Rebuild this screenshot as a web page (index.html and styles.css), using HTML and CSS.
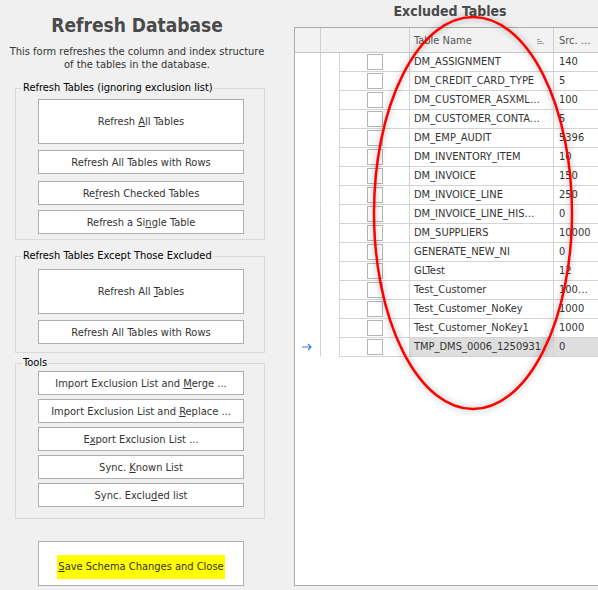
FILE: index.html
```html
<!DOCTYPE html>
<html lang="en">
<head>
    <meta charset="UTF-8">
    <meta name="viewport" content="width=device-width, initial-scale=1.0">
    <title>Refresh Database</title>
    <link rel="stylesheet" href="styles.css">
</head>
<body>
    <div class="left">
        <h1 class="title">Refresh Database</h1>
        <p class="intro">This form refreshes the column and index structure<br>of the tables in the database.</p>

        <div class="group group-ignore">
            <div class="legend">Refresh Tables (ignoring exclusion list)</div>
            <button class="btn big first">Refresh <u>A</u>ll Tables</button>
            <button class="btn b2">Refresh All Tables with Rows</button>
            <button class="btn b3">Re<u>f</u>resh Checked Tables</button>
            <button class="btn b4">Refresh a Si<u>n</u>gle Table</button>
        </div>

        <div class="group group-except">
            <div class="legend">Refresh Tables Except Those Excluded</div>
            <button class="btn big first">Refresh All <u>T</u>ables</button>
            <button class="btn b2">Refresh All Tables with Rows</button>
        </div>

        <div class="group group-tools">
            <div class="legend">Tools</div>
            <button class="btn tool first">Import Exclusion List and <u>M</u>erge ...</button>
            <button class="btn tool">Import Exclusion List and <u>R</u>eplace ...</button>
            <button class="btn tool">E<u>x</u>port Exclusion List ...</button>
            <button class="btn tool">Sync. <u>K</u>nown List</button>
            <button class="btn tool">Sync. Exclu<u>d</u>ed list</button>
        </div>

        <button class="btn big save"><span class="highlight"><u>S</u>ave Schema Changes and Close</span></button>
    </div>

    <div class="right">
        <h2 class="grid-title">Excluded Tables</h2>
        <div class="grid">
            <table>
                <colgroup>
                    <col class="c-ind"><col class="c-indent"><col class="c-check"><col class="c-name"><col class="c-src">
                </colgroup>
                <thead>
                    <tr>
                        <th class="ind"></th>
                        <th colspan="2"></th>
                        <th class="name">Table Name
                            <svg class="sort" width="8" height="7" viewBox="0 0 8 7">
                                <rect x="0" y="0" width="3" height="1" fill="#a0a0a0"/>
                                <rect x="0" y="2" width="5" height="1" fill="#a0a0a0"/>
                                <rect x="0" y="4" width="7" height="1" fill="#a0a0a0"/>
                            </svg>
                        </th>
                        <th class="src">Src. …</th>
                    </tr>
                </thead>
                <tbody id="rows"></tbody>
            </table>
        </div>
    </div>

    <svg class="annotation" width="598" height="590" viewBox="0 0 598 590">
        <ellipse cx="473" cy="213" rx="99" ry="196" fill="none" stroke="#ff0000" stroke-width="2.5"/>
    </svg>

    <script>
        (function(){
            const tables = [
                ['DM_ASSIGNMENT', '140'],
                ['DM_CREDIT_CARD_TYPE', '5'],
                ['DM_CUSTOMER_ASXML…', '100'],
                ['DM_CUSTOMER_CONTA…', '5'],
                ['DM_EMP_AUDIT', '5396'],
                ['DM_INVENTORY_ITEM', '10'],
                ['DM_INVOICE', '150'],
                ['DM_INVOICE_LINE', '250'],
                ['DM_INVOICE_LINE_HIS…', '0'],
                ['DM_SUPPLIERS', '10000'],
                ['GENERATE_NEW_NI', '0'],
                ['GLTest', '12'],
                ['Test_Customer', '100…'],
                ['Test_Customer_NoKey', '1000'],
                ['Test_Customer_NoKey1', '1000'],
                ['TMP_DMS_0006_1250931', '0']
            ];

            const rowsBody = document.getElementById('rows');
            const arrow = '<svg class="arrow" width="10" height="8" viewBox="0 0 10 8"><path d="M0 4H9M6 1L9 4L6 7" fill="none" stroke="#3d7fd6" stroke-width="1.2"/></svg>';

            tables.forEach((table, index) => {
                const last = index === tables.length - 1;
                const $row = document.createElement('tr');
                if (last) $row.classList.add('selected');

                $row.innerHTML = `
                    <td class="ind">${last ? arrow : ''}</td>
                    <td class="indent"></td>
                    <td class="check"><span class="box"></span></td>
                    <td class="name">${table[0]}</td>
                    <td class="src">${table[1]}</td>
                `;
                rowsBody.appendChild($row);
            });
        })()
    </script>
</body>
</html>
```

FILE: styles.css
```css
* {
    margin: 0;
    padding: 0;
    box-sizing: border-box;
}
html, body {
    overflow: hidden;
}
body {
    width: 598px;
    height: 590px;
    display: flex;
    background-color: #f0f0f0;
    color: #333;
    font-family: "DejaVu Sans Condensed", "DejaVu Sans", "Liberation Sans", sans-serif;
    font-stretch: condensed;
    font-size: 11px;
}

/* left panel */
div.left {
    width: 294px;
    flex: none;
    padding-left: 15px;
}
h1.title {
    width: 244px;
    margin-top: 13px;
    text-align: center;
    font-size: 19px;
    line-height: 24px;
    color: #4a4a4a;
}
p.intro {
    width: 256px;
    margin: 8px 0 0 -6px;
    text-align: center;
    line-height: 13px;
    white-space: nowrap;
}
div.group {
    width: 250px;
    border: 1px solid #d9d9d9;
}
div.group-ignore {
    margin-top: 17px;
    padding-bottom: 5px;
}
div.group-except {
    margin-top: 16px;
    padding-bottom: 8px;
}
div.group-tools {
    margin-top: 10px;
    padding-bottom: 11px;
}
div.legend {
    width: fit-content;
    margin: -8px 0 0 6px;
    padding: 0 1px;
    line-height: 14px;
    color: #000;
    background-color: #f0f0f0;
}
button.btn {
    display: block;
    width: 206px;
    height: 24px;
    margin-left: 22px;
    border: 1px solid #adadad;
    background-color: #fff;
    color: #333;
    font: inherit;
    text-align: center;
}
button.btn.big {
    height: 45px;
}
div.group-ignore .first {
    margin-top: 4px;
}
div.group-ignore .b2 {
    margin-top: 6px;
}
div.group-ignore .b3 {
    margin-top: 7px;
}
div.group-ignore .b4 {
    margin-top: 5px;
}
div.group-except .first {
    margin-top: 6px;
}
div.group-except .b2 {
    margin-top: 6px;
}
button.tool {
    margin-top: 4px;
}
div.group-tools .first {
    margin-top: 1px;
}
button.save {
    margin-top: 22px;
    margin-left: 23px;
    padding-top: 6px;
}
span.highlight {
    display: inline-block;
    padding: 5px 1px;
    line-height: 14px;
    background-color: #ffff00;
}
u {
    text-underline-offset: 1px;
}

/* right panel */
div.right {
    flex: none;
    width: 330px;
}
h2.grid-title {
    width: 312px;
    height: 27px;
    text-align: center;
    font-size: 14px;
    line-height: 22px;
    color: #4a4a4a;
}
div.grid {
    width: 330px;
    height: 559px;
    border: 1px solid #a9a9a9;
    background-color: #fff;
    overflow: hidden;
}
table {
    table-layout: fixed;
    width: 329px;
    border-collapse: separate;
    border-spacing: 0;
}
col.c-ind { width: 26px; }
col.c-indent { width: 18px; }
col.c-check { width: 71px; }
col.c-name { width: 144px; }
col.c-src { width: 70px; }

th {
    height: 25px;
    border-right: 1px solid #d0d0d0;
    border-bottom: 1px solid #c8c8c8;
    background-color: #f2f2f2;
    font-weight: normal;
    color: #555;
    text-align: left;
    white-space: nowrap;
}
th.name {
    padding-left: 4px;
}
th.src {
    padding-left: 5px;
}
svg.sort {
    float: right;
    margin: 5px 8px 0 0;
}
td {
    height: 19px;
    line-height: 18px;
    border-bottom: 1px solid #d4d4d4;
    border-right: 1px solid #d4d4d4;
    white-space: nowrap;
    overflow: hidden;
}
td.ind {
    border-bottom-color: transparent;
    border-right-color: #d0d0d0;
}
td.indent {
    border-bottom-color: transparent;
    border-right: none;
}
td.check {
    border-left: 1px solid #d4d4d4;
    text-align: center;
}
td.name {
    padding-left: 4px;
}
td.src {
    padding-left: 5px;
}
span.box {
    display: inline-block;
    width: 16px;
    height: 16px;
    margin-top: 1px;
    vertical-align: top;
    border: 1px solid #b4b4b4;
    background-color: #fff;
}
tr.selected td.name,
tr.selected td.src {
    background-color: #dedede;
}
svg.arrow {
    margin-left: 7px;
    vertical-align: middle;
}

/* red circle drawn over the screenshot */
svg.annotation {
    position: absolute;
    top: 0;
    left: 0;
    pointer-events: none;
    filter: drop-shadow(0 0 3px rgba(0, 0, 0, 0.35));
}
```
